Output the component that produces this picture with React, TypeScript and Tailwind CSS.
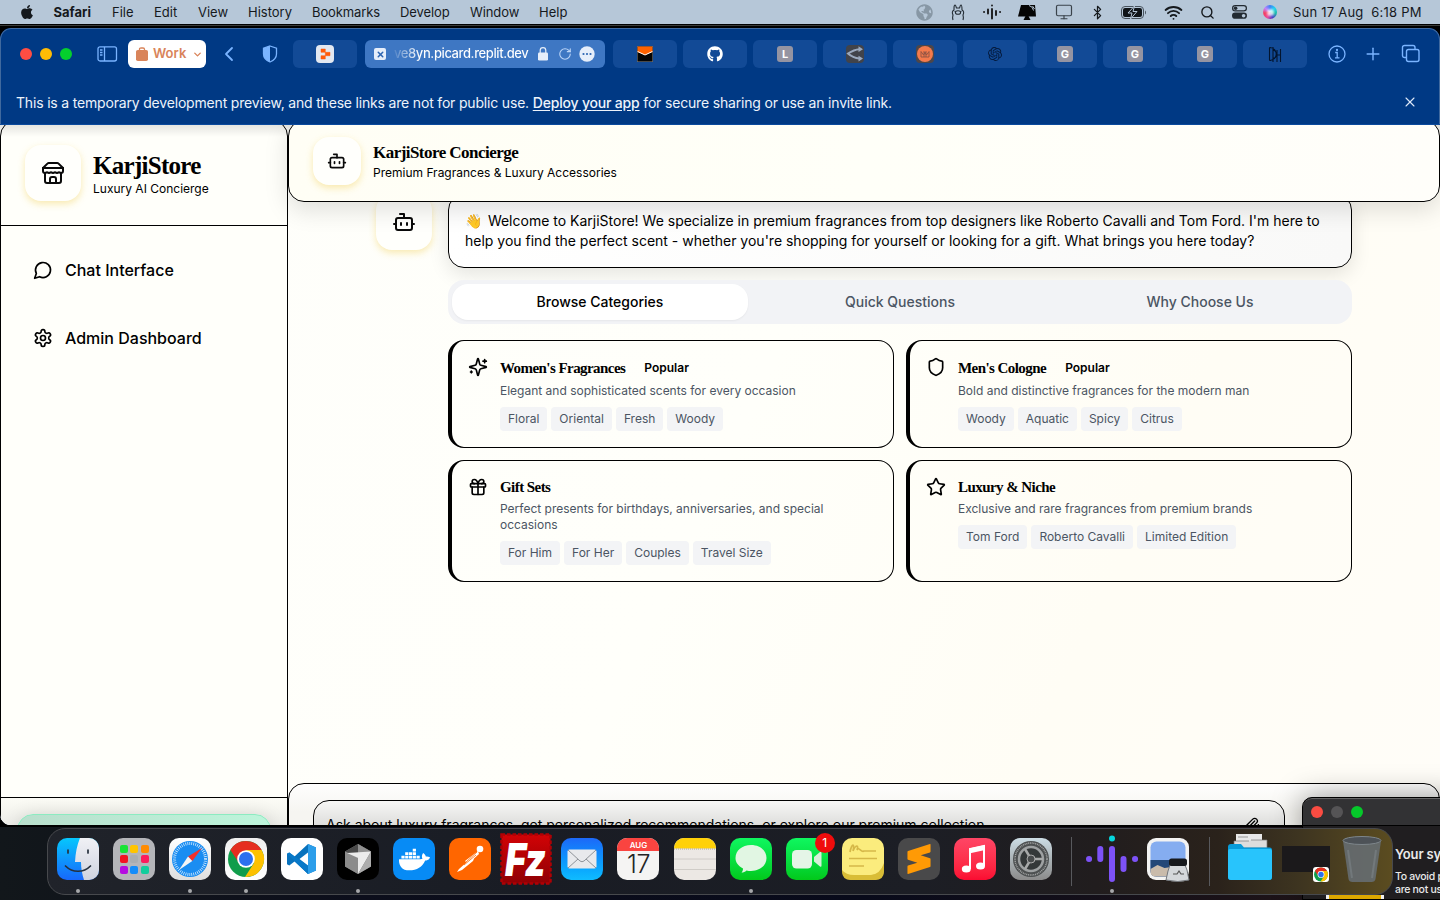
import React from "react";
import { Bot, Shield, Gift, Star, Paperclip, Wifi, Search, Bluetooth, Monitor, X, Plus, ChevronLeft, ChevronDown, RotateCw } from "lucide-react";
import { FaApple, FaGithub, FaDocker, FaGlobeAmericas } from "react-icons/fa";
import { SiOpenai, SiSublimetext } from "react-icons/si";

type Kids = { children?: React.ReactNode };

/* ---------- line icons ---------- */
function Line({ size, children, w = 2 }: Kids & { size: number; w?: number }) {
  return (
    <svg width={size} height={size} viewBox="0 0 24 24" fill="none" stroke="currentColor" strokeWidth={w} strokeLinecap="round" strokeLinejoin="round" className="shrink-0">
      {children}
    </svg>
  );
}
const StoreIcon = () => (
  <Line size={24}>
    <path d="m2 7 4.41-4.41A2 2 0 0 1 7.83 2h8.34a2 2 0 0 1 1.42.59L22 7" />
    <path d="M4 12v8a2 2 0 0 0 2 2h12a2 2 0 0 0 2-2v-8" />
    <path d="M15 22v-4a2 2 0 0 0-2-2h-2a2 2 0 0 0-2 2v4" />
    <path d="M2 7h20" />
    <path d="M22 7v3a2 2 0 0 1-2 2a2.7 2.7 0 0 1-1.59-.63.7.7 0 0 0-.82 0A2.7 2.7 0 0 1 16 12a2.7 2.7 0 0 1-1.59-.63.7.7 0 0 0-.82 0A2.7 2.7 0 0 1 12 12a2.7 2.7 0 0 1-1.59-.63.7.7 0 0 0-.82 0A2.7 2.7 0 0 1 8 12a2.7 2.7 0 0 1-1.59-.63.7.7 0 0 0-.82 0A2.7 2.7 0 0 1 4 12a2 2 0 0 1-2-2V7" />
  </Line>
);
const ChatIcon = () => (
  <Line size={20}>
    <path d="M7.9 20A9 9 0 1 0 4 16.1L2 22Z" />
  </Line>
);
const GearIcon = () => (
  <Line size={20}>
    <path d="M12.22 2h-.44a2 2 0 0 0-2 2v.18a2 2 0 0 1-1 1.73l-.43.25a2 2 0 0 1-2 0l-.15-.08a2 2 0 0 0-2.73.73l-.22.38a2 2 0 0 0 .73 2.73l.15.1a2 2 0 0 1 1 1.72v.51a2 2 0 0 1-1 1.74l-.15.09a2 2 0 0 0-.73 2.73l.22.38a2 2 0 0 0 2.73.73l.15-.08a2 2 0 0 1 2 0l.43.25a2 2 0 0 1 1 1.73V20a2 2 0 0 0 2 2h.44a2 2 0 0 0 2-2v-.18a2 2 0 0 1 1-1.73l.43-.25a2 2 0 0 1 2 0l.15.08a2 2 0 0 0 2.73-.73l.22-.39a2 2 0 0 0-.73-2.73l-.15-.08a2 2 0 0 1-1-1.74v-.5a2 2 0 0 1 1-1.74l.15-.09a2 2 0 0 0 .73-2.73l-.22-.38a2 2 0 0 0-2.73-.73l-.15.08a2 2 0 0 1-2 0l-.43-.25a2 2 0 0 1-1-1.73V4a2 2 0 0 0-2-2z" />
    <circle cx="12" cy="12" r="3" />
  </Line>
);
const SparklesIcon = () => (
  <Line size={20}>
    <path d="M9.937 15.5A2 2 0 0 0 8.5 14.063l-6.135-1.582a.5.5 0 0 1 0-.962L8.5 9.936A2 2 0 0 0 9.937 8.5l1.582-6.135a.5.5 0 0 1 .963 0L14.063 8.5A2 2 0 0 0 15.5 9.937l6.135 1.581a.5.5 0 0 1 0 .964L15.5 14.063a2 2 0 0 0-1.437 1.437l-1.582 6.135a.5.5 0 0 1-.963 0z" />
    <path d="M20 3v4M22 5h-4M4 17v2M5 18H3" />
  </Line>
);

/* ---------- menu bar ---------- */
function Slot({ w, children }: Kids & { w: string }) {
  return <div className={`flex h-full shrink-0 items-center justify-center ${w}`}>{children}</div>;
}

function MenuBar() {
  return (
    <div className="flex h-6 items-center bg-[#b6c7d8] text-[13px] leading-none text-[#15191d]">
      <div className="flex w-[53.5px] pl-[19px]"><FaApple size={16} /></div>
      <span className="w-[58.5px] font-bold">Safari</span>
      <span className="w-[42px]">File</span>
      <span className="w-[44px]">Edit</span>
      <span className="w-[50px]">View</span>
      <span className="w-[64px]">History</span>
      <span className="w-[88px] tracking-[-0.1px]">Bookmarks</span>
      <span className="w-[70px] tracking-[-0.1px]">Develop</span>
      <span className="w-[69px] tracking-[-0.1px]">Window</span>
      <span className="w-[40px]">Help</span>
      <div className="ml-auto flex h-full items-center">
        <Slot w="w-[34px]"><FaGlobeAmericas size={17} className="text-[#8797a5]" /></Slot>
        <Slot w="w-[34px]">
          <svg width="14" height="18" viewBox="0 0 14 18" fill="none" stroke="#222b33" strokeWidth="1.1">
            <path d="M2 17c-1-3 0-4 0-5-1-2-1-4 1-5 0-3 0-5 1-5s1 2 1.500 3h3C9 4 9 2 10 2s1 2 1 5c2 1 2 3 1 5 0 1 1 2 0 5" />
            <ellipse cx="7" cy="9.500" rx="2.600" ry="1.800" /><path d="M4 8v.8M10 8v.8" />
          </svg>
        </Slot>
        <Slot w="w-[33px]">
          <svg width="18" height="18" viewBox="0 0 18 18" stroke="#111" strokeWidth="1.800" strokeLinecap="round"><path d="M1 9h.1M5 6.500v4M9 6v9.500M9 2.500v.1M13 8v4M17 9h.1" /></svg>
        </Slot>
        <Slot w="w-[38px]">
          <svg width="20" height="18" viewBox="0 0 20 18" fill="#050505"><path d="M4 2h14l1 11.500H1z" /><path d="M6.500 17l2-4h3l2 4z" /><path d="M12 2.500q4 1 4.500 5M15.500 3l2 3" stroke="#b6c7d8" fill="none" strokeWidth="1" /></svg>
        </Slot>
        <Slot w="w-[36px]"><Monitor size={18} strokeWidth={1.6} className="text-[#3a434b]" /></Slot>
        <Slot w="w-[31px]"><Bluetooth size={15} strokeWidth={2} /></Slot>
        <Slot w="w-[42px]">
          <svg width="26" height="13" viewBox="0 0 26 13"><rect x=".5" y=".5" width="22" height="12" rx="3.500" fill="none" stroke="#49545e" /><rect x="2" y="2" width="19" height="9" rx="2" fill="#101418" /><path d="M24 4.500v4c1.300-.6 1.300-3.400 0-4z" fill="#49545e" /><path d="M13.500 0L7 7h4l-1.500 6L16 5.500h-4z" fill="#101418" stroke="#b6c7d8" strokeWidth="1" /></svg>
        </Slot>
        <Slot w="w-[37px]"><Wifi size={19} strokeWidth={2.4} /></Slot>
        <Slot w="w-[30px]"><Search size={15} strokeWidth={2.2} /></Slot>
        <Slot w="w-[34px]">
          <svg width="15" height="14" viewBox="0 0 15 14"><rect x=".6" y=".6" width="13.800" height="5.300" rx="2.650" fill="none" stroke="#222a31" strokeWidth="1.200" /><circle cx="3.600" cy="3.200" r="1.800" fill="#222a31" /><rect x="0" y="7.600" width="15" height="6.200" rx="3.100" fill="#222a31" /><circle cx="11.600" cy="10.700" r="1.800" fill="#b6c7d8" /></svg>
        </Slot>
        <Slot w="w-[28px]">
          <div className="flex size-[14px] items-center justify-center rounded-full bg-[conic-gradient(#3b82f6,#22d3ee,#14b8a6,#4338ca,#ec4899,#f43f5e,#c084fc,#3b82f6)]"><div className="size-[7px] rounded-full bg-white/80 blur-[1px]" /></div>
        </Slot>
        <div className="w-[156px] pl-[9px] whitespace-pre tracking-[0.22px]">Sun 17 Aug  6:18 PM</div>
      </div>
    </div>
  );
}

/* ---------- safari toolbar ---------- */
function Tab({ children }: Kids) {
  return <div className="flex h-7 w-16 shrink-0 items-center justify-center rounded-md bg-[#124a96]">{children}</div>;
}
function LetterIcon({ c }: { c: string }) {
  return <div className="flex size-4 items-center justify-center rounded-[3px] bg-[#9594a2] text-[11px] leading-none font-bold text-white">{c}</div>;
}

function Toolbar() {
  return (
    <div className="flex h-[50px] shrink-0 items-center text-[#7ab4ff]">
      <div className="flex w-[97px] items-center gap-2 pl-5">
        <i className="size-3 rounded-full bg-[#ff4d43]" />
        <i className="size-3 rounded-full bg-[#ffbc05]" />
        <i className="size-3 rounded-full bg-[#05cf2d]" />
      </div>
      <svg width="21" height="16" viewBox="0 0 21 16" fill="none" stroke="currentColor" strokeWidth="1.300"><rect x="1" y=".8" width="18.500" height="14.200" rx="2" /><path d="M7.500 1v14M3 4h2.500M3 6.500h2.500M3 9h2.500" /></svg>
      <div className="ml-[10px] flex h-7 w-[78px] items-center rounded-md bg-white pl-[7px] text-[13px] font-semibold text-[#d9845a]">
        <svg width="14" height="15" viewBox="0 0 14 15"><rect x="1" y="3" width="12" height="11" rx="1.800" fill="currentColor" /><path d="M4.500 4V2.200Q4.500 1 6 1h2q1.500 0 1.500 1.200V4" fill="none" stroke="currentColor" strokeWidth="1.300" /></svg>
        <span className="ml-[4px] w-[35px]">Work</span>
        <ChevronDown size={11} strokeWidth={3} className="ml-[4px]" />
      </div>
      <ChevronLeft size={24} strokeWidth={1.8} className="ml-[11px]" />
      <svg width="16" height="18" viewBox="0 0 16 18" className="ml-[21px]"><path d="M8 1l6.500 2.200V9c0 4-3 6.500-6.500 8-3.500-1.500-6.500-4-6.500-8V3.200z" fill="none" stroke="currentColor" strokeWidth="1.300" /><path d="M8 1L1.500 3.200V9c0 4 3 6.500 6.500 8z" fill="currentColor" /></svg>
      <div className="ml-[15px] flex">
        <Tab>
          <svg width="18" height="18" viewBox="0 0 18 18"><rect width="18" height="18" rx="4" fill="#e3e8f1" /><path d="M5 4h4.300v3.300H5zM9.300 7.300H14v3.400H9.300zM5 10.700h4.300V14H5z" fill="#ff5a0a" stroke="#ff5a0a" strokeWidth=".5" strokeLinejoin="round" /></svg>
        </Tab>
        <div className="mx-2 flex h-7 w-60 items-center rounded-md bg-[#3e77c3] pl-[9px] text-[13px] font-medium text-white">
          <div className="flex size-3 shrink-0 items-center justify-center rounded-[2px] bg-[#e6eefa] text-[#2c65b2]"><X size={9} strokeWidth={4} /></div>
          <span className="ml-[8px] w-[138px] shrink-0 bg-linear-to-r from-white/10 to-white to-[26px] bg-clip-text whitespace-nowrap text-transparent tracking-[-0.4px]">ve8yn.picard.replit.dev</span>
          <svg width="10" height="14" viewBox="0 0 10 14" className="ml-[6px] shrink-0"><rect y="5.500" width="10" height="8" rx="1.300" fill="#e6eefa" /><path d="M2.200 6V3.500a2.800 2.800 0 0 1 5.600 0V6" fill="none" stroke="#e6eefa" strokeWidth="1.200" /></svg>
          <RotateCw size={14} strokeWidth={1.9} className="ml-[10px] shrink-0 text-[#bcd5f7]" />
          <svg width="16" height="16" viewBox="0 0 16 16" className="ml-[7px] shrink-0"><circle cx="8" cy="8" r="7.700" fill="#e6eefa" /><circle cx="4.500" cy="8" r="1.100" fill="#2c65b2" /><circle cx="8" cy="8" r="1.100" fill="#2c65b2" /><circle cx="11.500" cy="8" r="1.100" fill="#2c65b2" /></svg>
        </div>
        <div className="flex gap-[6px]">
          <Tab><svg width="16" height="16" viewBox="0 0 16 16"><rect width="16" height="16" fill="#777" /><rect x=".6" y=".6" width="14.800" height="14.800" fill="#050505" /><path d="M.6.600h14.800V6L8 9 .6 6z" fill="#ff6200" /><path d="M.6 5.500L8 9l7.400-3.500" stroke="#fff" fill="none" strokeWidth="1" /></svg></Tab>
          <Tab><FaGithub size={16} className="text-white" /></Tab>
          <Tab><LetterIcon c="L" /></Tab>
          <Tab><svg width="18" height="18" viewBox="0 0 18 18"><rect width="18" height="18" rx="4" fill="#41434a" /><path d="M13.500 4.200C8 4.500 5 6.500 2 8.500c3 2.800 6 4.500 11.500 5" fill="none" stroke="#9aa8bd" strokeWidth="2" /><path d="M12.500 1.300L17 4.200l-4.500 2.800zM12.500 10.800l4.500 2.700-4.500 2.900z" fill="#9aa8bd" /></svg></Tab>
          <Tab><svg width="18" height="18" viewBox="0 0 18 18"><rect width="18" height="18" rx="4" fill="#4e4648" /><circle cx="9" cy="9" r="8" fill="#f47a4c" /><path d="M5 12V6.500l2.500 3.500L10 6.500V12M8 12V6.500l2.500 3.500L13 6.500V12M5 12h8" fill="none" stroke="#8c5244" strokeWidth=".9" /></svg></Tab>
          <Tab><SiOpenai size={14} className="text-[#041a3c]" /></Tab>
          <Tab><LetterIcon c="G" /></Tab>
          <Tab><LetterIcon c="G" /></Tab>
          <Tab><LetterIcon c="G" /></Tab>
          <Tab><svg width="14" height="17" viewBox="0 0 14 17" fill="none" stroke="#03152f" strokeWidth="1.100"><path d="M1.500 1.500v13M1.500 1.500c9 0 9 13 0 13M5 1v15M5 4c4.500 1 4.500 8 0 8M9 4v12M12.500 3v13M9 9h3.500" /></svg></Tab>
        </div>
      </div>
      <svg width="18" height="18" viewBox="0 0 18 18" fill="none" stroke="currentColor" strokeWidth="1.300" className="ml-[21px]"><circle cx="9" cy="9" r="8" /><path d="M7.200 7.500H9.200v5M7 12.800h4.500" /><circle cx="9" cy="5" r=".5" fill="currentColor" /></svg>
      <Plus size={20} strokeWidth={1.7} className="ml-[17px]" />
      <svg width="20" height="20" viewBox="0 0 20 20" fill="none" stroke="currentColor" strokeWidth="1.400" className="ml-[18px]"><path d="M5 13.500H3.500a2 2 0 0 1-2-2v-8a2 2 0 0 1 2-2h8.500a2 2 0 0 1 2 2V5" /><rect x="5.500" y="5.500" width="12.500" height="12" rx="2" /></svg>
    </div>
  );
}

function Banner() {
  return (
    <div className="flex h-[46px] shrink-0 items-center border-b border-[#0b4a9d] px-4 pt-[2px] text-[14px] tracking-[-0.181px] text-[#edf3fb]">
      <span>This is a temporary development preview, and these links are not for public use. <u className="font-medium underline-offset-2">Deploy your app</u> for secure sharing or use an invite link.</span>
      <X size={16} strokeWidth={1.6} className="mr-[6px] mb-[2px] ml-auto text-[#dce7f8]" />
    </div>
  );
}

/* ---------- page ---------- */
function IconTile({ children, size }: Kids & { size: string }) {
  return <div className={`flex shrink-0 items-center justify-center rounded-2xl bg-[#fffffc] text-[#0a0a0a] shadow-[0_3px_7px_rgba(240,200,60,0.38)] ${size}`}>{children}</div>;
}

function Sidebar() {
  return (
    <aside className="flex w-72 shrink-0 flex-col rounded-2xl border border-black bg-[#fffffa]">
      <div className="flex h-[105px] items-center gap-3 border-b border-black px-6">
        <IconTile size="size-14"><StoreIcon /></IconTile>
        <div>
          <h1 className="font-['Liberation_Serif',serif] text-[25px] leading-8 font-bold tracking-[-0.72px]">KarjiStore</h1>
          <p className="-mt-px text-xs">Luxury AI Concierge</p>
        </div>
      </div>
      <nav className="flex flex-col gap-3 p-4 font-medium">
        <a className="flex h-14 items-center gap-3 px-4"><ChatIcon />Chat Interface</a>
        <a className="flex h-14 items-center gap-3 px-4"><GearIcon />Admin Dashboard</a>
      </nav>
      <div className="mt-auto h-[100px] border-t border-black bg-linear-to-b from-[#fcfcf6] to-[#e9e9e4] to-35% p-4">
        <div className="h-20 rounded-2xl border border-[#8cebc1] bg-linear-to-r from-[#b9dfcd] to-[#bdf5db] shadow-[0_0_18px_rgba(0,0,0,0.12)]" />
      </div>
    </aside>
  );
}

type Category = { icon: React.ReactNode; title: string; popular?: boolean; text: string; tags: string[] };
const categories: Category[] = [
  { icon: <SparklesIcon />, title: "Women's Fragrances", popular: true, text: "Elegant and sophisticated scents for every occasion", tags: ["Floral", "Oriental", "Fresh", "Woody"] },
  { icon: <Shield size={20} />, title: "Men's Cologne", popular: true, text: "Bold and distinctive fragrances for the modern man", tags: ["Woody", "Aquatic", "Spicy", "Citrus"] },
  { icon: <Gift size={20} />, title: "Gift Sets", text: "Perfect presents for birthdays, anniversaries, and special occasions", tags: ["For Him", "For Her", "Couples", "Travel Size"] },
  { icon: <Star size={20} />, title: "Luxury & Niche", text: "Exclusive and rare fragrances from premium brands", tags: ["Tom Ford", "Roberto Cavalli", "Limited Edition"] },
];

function Card({ icon, title, popular, text, tags }: Category) {
  return (
    <div className="flex items-start gap-3 rounded-2xl border border-l-4 border-black p-4">
      <div className="w-5 shrink-0">{icon}</div>
      <div className="min-w-0 flex-1">
        <div className="flex items-center gap-2">
          <h3 className="font-['Liberation_Serif',serif] text-[15px] leading-5 font-bold tracking-[-0.56px]">{title}</h3>
          {popular && <span className="rounded-full border border-transparent px-2.5 py-0.5 text-xs font-semibold">Popular</span>}
        </div>
        <p className="mt-1 text-xs text-[#4b5563]">{text}</p>
        <div className="mt-2 flex gap-1">
          {tags.map((t) => <span key={t} className="rounded bg-[#f3f4f6] px-2 py-1 text-xs text-[#4b5563]">{t}</span>)}
        </div>
      </div>
    </div>
  );
}

function Main() {
  return (
    <main className="flex min-w-0 flex-1 flex-col">
      <header className="z-10 flex h-[82px] shrink-0 items-center gap-3 rounded-2xl border border-black bg-linear-to-r from-[#fffef5] via-[#fffff8] to-[#fffefa] px-6 shadow-[0_8px_24px_rgba(0,0,0,0.13)]">
        <IconTile size="size-12"><Bot size={20} /></IconTile>
        <div>
          <h2 className="font-['Liberation_Serif',serif] text-[17px] leading-6 font-bold tracking-[-0.54px]">KarjiStore Concierge</h2>
          <p className="text-xs">Premium Fragrances &amp; Luxury Accessories</p>
        </div>
      </header>
      <section className="-mt-2 flex flex-1 gap-4 pr-[88px] pl-[88px]">
        <IconTile size="size-14"><Bot size={24} /></IconTile>
        <div className="min-w-0 flex-1">
          <div className="rounded-2xl border border-black bg-linear-to-r from-white to-[#f9f9f8] p-4 text-sm shadow-[0_6px_20px_rgba(0,0,0,0.11)]">
            <span className="tracking-[1.5px]">👋</span> Welcome to KarjiStore! We specialize in premium fragrances from top designers like Roberto Cavalli and Tom Ford. I'm here to help you find the perfect scent - whether you're shopping for yourself or looking for a gift. What brings you here today?
          </div>
          <div className="mt-3 grid h-11 grid-cols-3 gap-1 rounded-2xl bg-[#f2f3f6] p-1 text-sm font-medium text-[#4b5563]">
            <div className="flex items-center justify-center rounded-2xl bg-white text-black shadow-xs">Browse Categories</div>
            <div className="flex items-center justify-center">Quick Questions</div>
            <div className="flex items-center justify-center">Why Choose Us</div>
          </div>
          <div className="mt-4 grid grid-cols-2 gap-3">
            {categories.map((c) => <Card key={c.title} {...c} />)}
          </div>
        </div>
      </section>
      <footer className="h-[115px] shrink-0 rounded-2xl border border-black bg-linear-to-b from-[#fefefe]/90 to-[#f6f5f1] to-25% px-6 pt-4">
        <div className="flex h-[50px] w-[972px] items-center justify-between rounded-2xl border border-black bg-linear-to-b from-[#f7f7f6] to-[#dededc] to-50% pr-6 pl-3 text-sm">
          <span>Ask about luxury fragrances, get personalized recommendations, or explore our premium collection...</span>
          <Paperclip size={16} />
        </div>
      </footer>
    </main>
  );
}

function SafariWindow() {
  return (
    <div className="absolute top-[28px] left-0 flex h-[797px] w-[1440px] flex-col overflow-hidden rounded-[11px] bg-[#003984]">
      <div className="flex flex-col rounded-t-[11px] border-x border-t border-[#40699e] [&>*]:-mx-px"><Toolbar /><Banner /></div>
      <div className="relative flex h-[700px] shrink-0 overflow-hidden bg-[linear-gradient(115deg,#fefefa_0%,#fffffa_50%,#fffdf5_75%,#fffdf8_100%)]">
        <div className="-mt-[5px] flex h-[778px] w-full"><Sidebar /><Main /></div>
        <div className="absolute inset-x-0 top-0 h-3 bg-linear-to-b from-black/10 to-transparent" />
      </div>
    </div>
  );
}

/* ---------- background window ---------- */
function DialogWindow() {
  return (
    <div className="absolute top-[797px] left-[1302px] h-[103px] w-[160px] overflow-hidden rounded-tl-[10px] border border-black bg-[#201e20] text-[#e9e9e9] shadow-[0_0_30px_rgba(0,0,0,0.4)]">
      <div className="flex h-[28px] items-center gap-2 rounded-tl-[9px] border-t border-b border-t-[#666] border-b-black bg-[#323234] pb-px pl-[8px]">
        <i className="size-3 rounded-full bg-[#fa4c42]" /><i className="size-3 rounded-full bg-[#555456]" /><i className="size-3 rounded-full bg-[#05c82a]" />
      </div>
      <div className="pt-[18px] pl-[92px] whitespace-nowrap">
        <div className="text-[13px] leading-5 font-semibold tracking-[-0.15px]">Your system</div>
        <div className="mt-[6px] text-[10.5px] leading-[13px] font-medium tracking-[-0.3px]">To avoid problems<br />are not used</div>
      </div>
      <div className="-mt-px ml-[23px] h-4 w-[58px] border-x-[3px] border-[#eee] bg-[#dda800]" />
    </div>
  );
}

/* ---------- dock ---------- */
function App42({ children, dot, bg = "" }: Kids & { dot?: boolean; bg?: string }) {
  return (
    <div className="relative flex h-full w-[56.06px] shrink-0 flex-col items-center pt-[9px]">
      <div className={`flex size-[42px] shrink-0 items-center justify-center rounded-[10px] ${bg}`}>{children}</div>
      {dot && <i className="mt-[9px] size-1 shrink-0 rounded-full bg-[#a7a8ab]" />}
    </div>
  );
}
const S = ({ children }: Kids) => <svg width="42" height="42" viewBox="0 0 42 42" className="overflow-visible">{children}</svg>;
const launchpad = ["bg-[#19e336]", "bg-[#ffc400]", "bg-[#ff8b00]", "bg-[#f41222]", "bg-[#a9adb1]", "bg-[#fb1c5d]", "bg-[#b50be0]", "bg-[#138cfa]", "bg-[#12cd9d]"];

function ChromeMark() {
  return (
    <>
      <circle cx="21" cy="21" r="18" fill="#109d4b" />
      <path d="M5.400 12A18 18 0 0 1 36.600 12L21 12.500 14 25z" fill="#e52e20" />
      <path d="M36.600 12A18 18 0 0 1 20 39l9-14-8-13z" fill="#fdc100" />
      <circle cx="21" cy="21" r="8.800" fill="#fff" /><circle cx="21" cy="21" r="7" fill="#2b70ee" />
    </>
  );
}

function Sep() {
  return <div className="flex h-full w-[25.500px] shrink-0 justify-center pt-[8px]"><i className="h-[49px] w-px bg-[#58595d]" /></div>;
}

function Dock() {
  return (
    <div className="absolute top-[828px] left-[47px] flex h-[67px] w-[1346px] rounded-[18px] border border-[#47494d] bg-[linear-gradient(90deg,#20232a_0%,#191c24_35%,#1c1e25_65%,#211d1e_78%,#2a221b_87%,#3d3420_93%,#5b4c20_100%)] pl-[2px]">
      <App42 dot bg="overflow-hidden">
        <S>
          <defs><linearGradient id="fa" x2="0" y2="1"><stop stopColor="#06c7fd" /><stop offset="1" stopColor="#1768fb" /></linearGradient><linearGradient id="fb" x2="0" y2="1"><stop stopColor="#f0f1f5" /><stop offset="1" stopColor="#cfd3df" /></linearGradient></defs>
          <rect width="42" height="42" fill="url(#fa)" /><path d="M23 0c-3 7-4.500 15-5 24h6c0 6 1 12 3 18h15V0z" fill="url(#fb)" />
          <path d="M11 12v3M31 12v3M8.500 28c7 7 18 7 25 0" fill="none" stroke="#25303d" strokeWidth="1.700" strokeLinecap="round" />
        </S>
      </App42>
      <App42 bg="bg-[#b4b5b9]"><div className="grid grid-cols-3 gap-[2.500px]">{launchpad.map((c) => <i key={c} className={`size-2 rounded-[2px] ${c}`} />)}</div></App42>
      <App42 dot bg="bg-linear-to-b from-white to-[#dedede]">
        <S><circle cx="21" cy="21" r="18" fill="#1a8df2" /><circle cx="21" cy="21" r="15.500" fill="none" stroke="#e6f4ff" strokeWidth="3" strokeDasharray=".7 1.300" /><path d="M33 10L19 18.500l4.300 4.600z" fill="#f32f2b" /><path d="M10 32l9-13.500 4.300 4.600z" fill="#f5f5f5" /></S>
      </App42>
      <App42 dot bg="bg-linear-to-b from-[#eee] to-white"><S><ChromeMark /></S></App42>
      <App42 bg="bg-white">
        <S><path d="M27 6l8 3.500v23L27 36 13.500 23.500 8.300 27.500 6 26.200V15.800l2.300-1.300 5.200 4z M27 14.500L18.500 21l8.500 6.500z" fill="#0872bd" fillRule="evenodd" /><path d="M27 6l8 3.500v23L27 36z" fill="#2c9eea" /><path d="M6 15.800l2.300-1.300L27 28v8z" fill="#0879c9" /></S>
      </App42>
      <App42 dot bg="bg-black">
        <S><path d="M21 6l13 7.500v15L21 36 8 28.500v-15z" fill="#777" /><path d="M21 6l13 7.500L21 20 8 13.500z" fill="#4b4b4b" /><path d="M21 6v11l13-3.500z" fill="#909090" /><path d="M8 13.500L21 20v16L8 28.500z" fill="#8c8c8c" /><path d="M10 15l24-1.500L21 36V20z" fill="#ececec" /><path d="M34 13.500v15L21 36z" fill="#adadad" /></S>
      </App42>
      <App42 bg="bg-[#078bf5]"><FaDocker size={31} className="text-white" /></App42>
      <App42 bg="bg-[#ff6600]">
        <S><circle cx="31" cy="11" r="3.300" fill="#fff" /><path d="M29 13L16 23l3 3 11-10zM27 16L10 31l-2 3 5-2 11-9z" fill="#fff" /><path d="M28 14L17 24M27 17L15 27" stroke="#ff6600" strokeWidth=".8" /></S>
      </App42>
      <App42>
        <svg width="52" height="52" viewBox="0 0 52 52" className="shrink-0">
          <defs><linearGradient id="fz" x2="0" y2="1"><stop stopColor="#d20306" /><stop offset="1" stopColor="#8f0004" /></linearGradient></defs>
          <rect x="1.500" y="1.500" width="49" height="49" fill="url(#fz)" stroke="#b00004" strokeWidth="2.500" strokeDasharray="3.500 2" />
          <text x="5" y="43" fontSize="46" fontWeight="900" fontStyle="italic" fill="#fff" textLength="41" lengthAdjust="spacingAndGlyphs">Fz</text>
        </svg>
      </App42>
      <App42 bg="bg-linear-to-b from-[#1d68f8] to-[#10bcff]">
        <S><rect x="6.500" y="11.500" width="29" height="19" rx="2" fill="#e8e9ec" /><path d="M7 12l12 11q2 1.500 4 0l12-11M7 30l10-9M35 30l-10-9" fill="none" stroke="#85898f" strokeWidth=".9" /></S>
      </App42>
      <App42 bg="overflow-hidden bg-[#f5f4f3] flex-col !justify-start">
        <div className="flex h-[13px] w-full shrink-0 items-center justify-center bg-[#fa4440] text-[8px] font-semibold text-white">AUG</div>
        <div className="text-[25px] leading-[27px] font-light tracking-[-0.5px] text-[#252525]">17</div>
      </App42>
      <App42 bg="overflow-hidden">
        <S><rect width="42" height="42" fill="#ece8e4" /><rect width="42" height="10.500" fill="#ffd108" /><path d="M0 11h42" stroke="#aaa49d" strokeDasharray="1 1" /><path d="M0 21h42M0 31.500h42" stroke="#c9c4bf" strokeWidth=".8" /></S>
      </App42>
      <App42 dot bg="bg-linear-to-b from-[#0ff75f] to-[#02c919]">
        <S><path d="M21 7c9 0 15.500 5.500 15.500 13S30 33 21 33c-1.500 0-3 0-4.500-.5-1.500 1.500-3 2-5 2 1-1 1.500-2.500 1.500-4C8.500 28 5.500 24.500 5.500 20 5.500 12.500 12 7 21 7z" fill="#e1f6e3" /></S>
      </App42>
      <App42 bg="bg-linear-to-b from-[#0ff75f] to-[#02c919]">
        <S><rect x="6" y="12" width="20" height="18.500" rx="4.500" fill="#e5f5e7" /><path d="M28 19l6-5q1.500-1 1.500 1v12.500q0 2-1.500 1l-6-5z" fill="#d7efda" /></S>
        <div className="absolute top-[4px] left-[36px] flex size-5 items-center justify-center rounded-full bg-[#f00c0c] text-[12px] text-white">1</div>
      </App42>
      <App42 bg="bg-[#fbec7d]">
        <S><path d="M0 31v2q0 9 9 9h24q9 0 9-9v-8q-4 12-14 12z" fill="#d9bd36" /><path d="M0 32q4 5 12 5h16q8-2 13-11l-4-4H0z" fill="#fbec7d" /><path d="M8 14c2-10 5-8 3-1 3-7 6-6 4-1 2-4 4 3 7 1h12M7 20.500h28M7 28h15" fill="none" stroke="#d6b849" strokeWidth="1.700" /></S>
      </App42>
      <App42 bg="bg-[#49494a]"><SiSublimetext size={30} className="text-[#ff9a05]" /></App42>
      <App42 bg="bg-linear-to-b from-[#ff4565] to-[#fb0a31]">
        <S><path d="M16 31V11l14-3v20" fill="none" stroke="#fff" strokeWidth="2" /><path d="M15 10.500L31 7v5l-16 3.500z" fill="#fff" /><ellipse cx="12.300" cy="31" rx="4.500" ry="3.600" fill="#fff" /><ellipse cx="26.500" cy="28" rx="4.500" ry="3.600" fill="#fff" /></S>
      </App42>
      <App42 bg="bg-linear-to-b from-[#ccdde5] to-[#8b8b8b]">
        <S><circle cx="21" cy="21" r="18" fill="#4d5051" /><circle cx="21" cy="21" r="16" fill="none" stroke="#a5a7a7" strokeWidth="1.500" strokeDasharray="1 .8" /><circle cx="21" cy="21" r="12" fill="#343839" stroke="#9ea1a2" strokeWidth="2.500" /><path d="M21 21h12M21 21l-6-10M21 21l-6 10" stroke="#a7a9a9" strokeWidth="2.500" /><circle cx="21" cy="21" r="4" fill="#484b4c" stroke="#aaa" /></S>
      </App42>
      <Sep />
      <App42 dot>
        <S><g strokeWidth="6" strokeLinecap="round" stroke="#7d52f7"><path d="M-2 21h.1M9.300 11v10M21 11v30M32.500 21v10M44 21h.1" /><path d="M21 .5v.1" stroke="#06d5dc" /></g></S>
      </App42>
      <App42>
        <S><rect width="42" height="42" rx="9" fill="#f3f3f2" /><rect x="3.500" y="3.500" width="35" height="35" rx="6" fill="#85adf0" /><path d="M3.500 22h35v11q0 5.500-6 5.500h-23q-6 0-6-5.500z" fill="#244878" /><path d="M3.500 31l7-4 7 3 7-1v9.500H9q-5.500 0-5.500-5z" fill="#c9bbab" /><path d="M23 27h15l2 5 2 10q-11 3-23 0l2-9z" fill="#d5d8db" stroke="#73777c" /><rect x="22" y="20.500" width="18" height="7.500" rx="2.500" fill="#17191c" /><path d="M26 36h4l2-3 2 3h3" fill="none" stroke="#555" strokeWidth="1.200" /></S>
      </App42>
      <Sep />
      <App42>
        <S><path d="M7-4h26v16H7z" fill="#e8e8e8" /><path d="M9-1h10M22 2h16v8H5V3h15" fill="#ddd" stroke="#777" strokeWidth=".7" /><path d="M-1 9q0-3 3-3h10l3 3.500h26q2 0 2 2.500v27q0 3-3 3H2q-3 0-3-3z" fill="#079cda" /><path d="M-1 13q0-2 2-2h40q2 0 2 2v26q0 3-3 3H2q-3 0-3-3z" fill="#28c4fc" /></S>
      </App42>
      <App42>
        <S><rect x="-3" y="8" width="48" height="26" fill="#1b191b" /><rect x="28" y="29" width="16" height="15" rx="3" fill="#fff" /><g transform="translate(27.900 28.400) scale(.385)"><ChromeMark /></g></S>
      </App42>
      <App42>
        <S><path d="M2 3l5.500 38q.5 3 4 3h19q3.500 0 4-3L40 3z" fill="#666d71" fillOpacity=".9" /><ellipse cx="21" cy="2.500" rx="19" ry="4" fill="#4d5257" stroke="#7e868b" /><path d="M7 12l4 28M35 12l-4 28" stroke="#899095" strokeOpacity=".4" strokeWidth="2" /></S>
      </App42>
    </div>
  );
}

export default function App() {
  return (
    <div className="relative h-[900px] w-[1440px] overflow-hidden bg-[linear-gradient(90deg,#12171b_0%,#0c0e1b_25%,#080a1a_60%,#1a1218_85%,#241719_100%)] font-['Inter','Noto_Color_Emoji',sans-serif] text-black">
      <div className="absolute inset-x-0 top-0 h-10 bg-black"><MenuBar /><div className="mt-px h-px bg-[#3a3b38]" /></div>
      <div className="absolute inset-x-0 top-[815px] h-3 bg-black" />
      <SafariWindow />
      <DialogWindow />
      <Dock />
    </div>
  );
}
